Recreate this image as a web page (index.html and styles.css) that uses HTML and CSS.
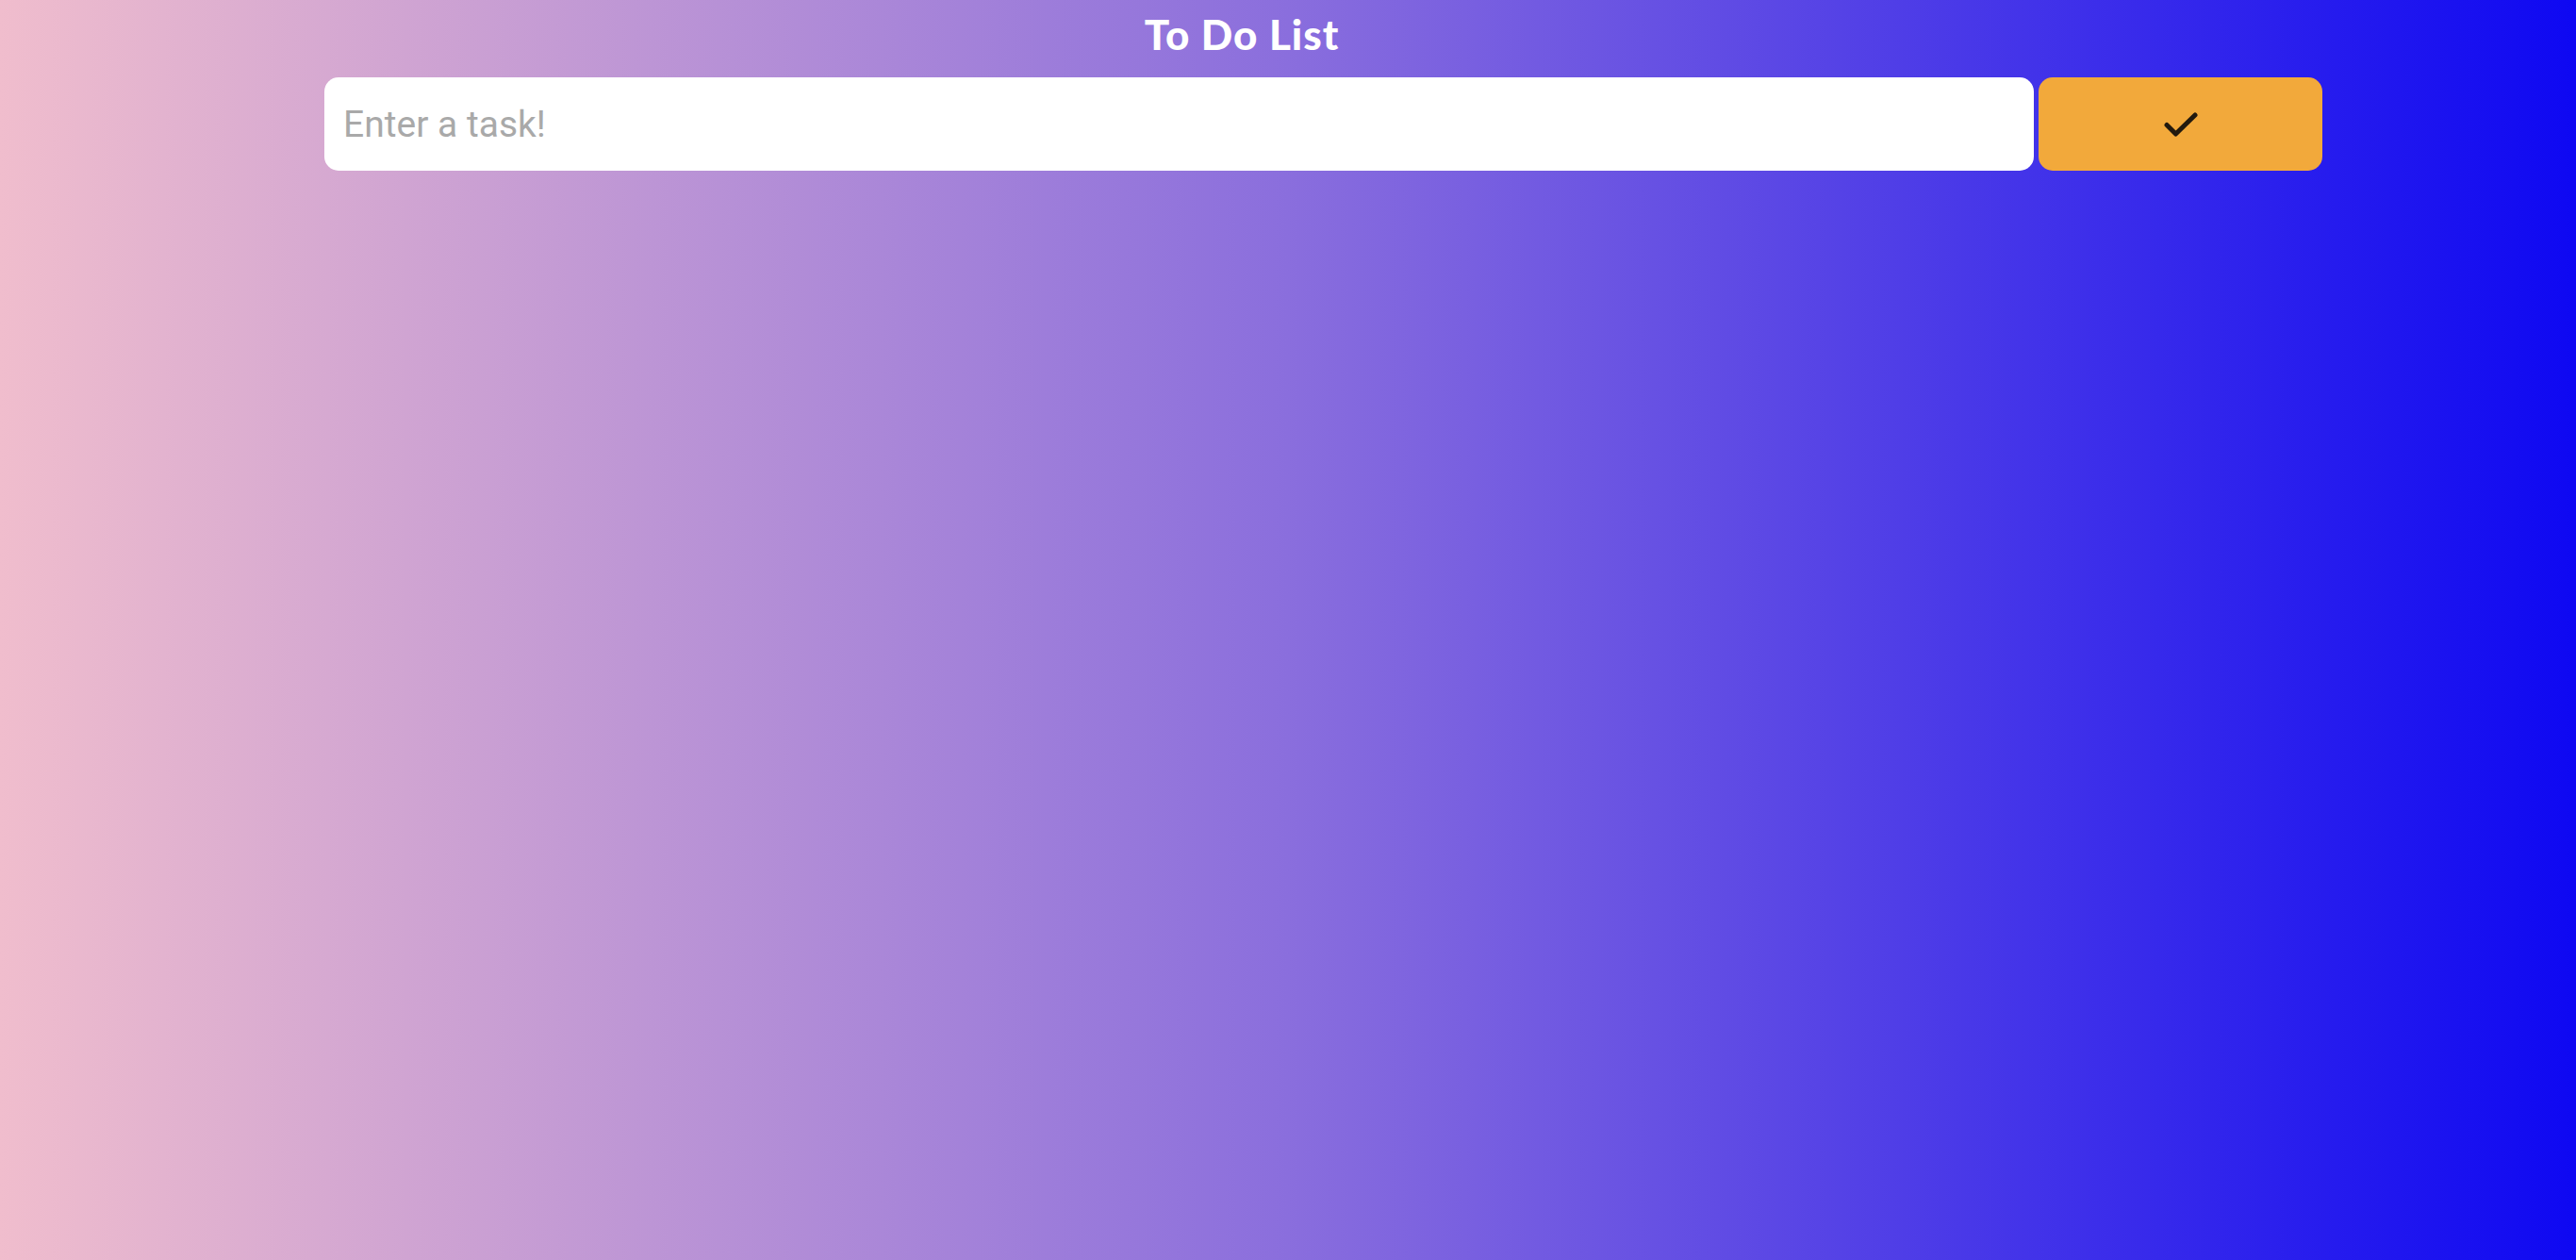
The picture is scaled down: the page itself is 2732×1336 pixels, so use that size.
FILE: index.html
```html
<!DOCTYPE html>
<html lang="en">
<head>
<meta charset="utf-8">
<title>To Do List</title>
<link rel="stylesheet" href="styles.css">
</head>
<body>
<div class="page">
  <h1 class="title">To Do List</h1>
  <form class="task-form">
    <input class="task-input" type="text" placeholder="Enter a task!">
    <button class="task-submit" type="button" aria-label="Add task">
      <svg class="check" viewBox="0 0 36 26" width="36" height="26"><path d="M3 13.5 L12.5 23 L33 3" fill="none" stroke="#231a0e" stroke-width="5" stroke-linecap="round" stroke-linejoin="round"/></svg>
    </button>
  </form>
</div>
</body>
</html>
```
FILE: styles.css
```css
html, body {
  margin: 0;
  padding: 0;
  height: 100%;
}
body {
  background: linear-gradient(to right, #f0bdcd 0%, #8a6edd 50%, #0e08f2 100%);
  font-family: "Roboto", "Liberation Sans", sans-serif;
}
.page {
  min-height: 100vh;
  display: flex;
  flex-direction: column;
}
.title {
  margin: 0;
  padding: 11px 98px 0 0;
  text-align: center;
  font-family: "Lato", "Open Sans", sans-serif;
  font-weight: 900;
  font-size: 44px;
  line-height: 50px;
  color: #ffffff;
  letter-spacing: 1px;
}
.task-form {
  display: flex;
  gap: 5px;
  margin: 21px 0 0 344px;
  width: 2119px;
}
.task-input {
  box-sizing: border-box;
  width: 1813px;
  height: 99px;
  border: none;
  outline: none;
  border-radius: 15px;
  background: #ffffff;
  padding: 0 20px;
  font-family: "Roboto", "Liberation Sans", sans-serif;
  font-size: 39px;
  color: #333;
}
.task-input::placeholder {
  color: #a9a9a9;
}
.task-submit {
  width: 301px;
  height: 99px;
  border: none;
  border-radius: 15px;
  background: #f2a93b;
  display: flex;
  align-items: center;
  justify-content: center;
  padding: 0;
  cursor: pointer;
}
.check {
  display: block;
}
```
